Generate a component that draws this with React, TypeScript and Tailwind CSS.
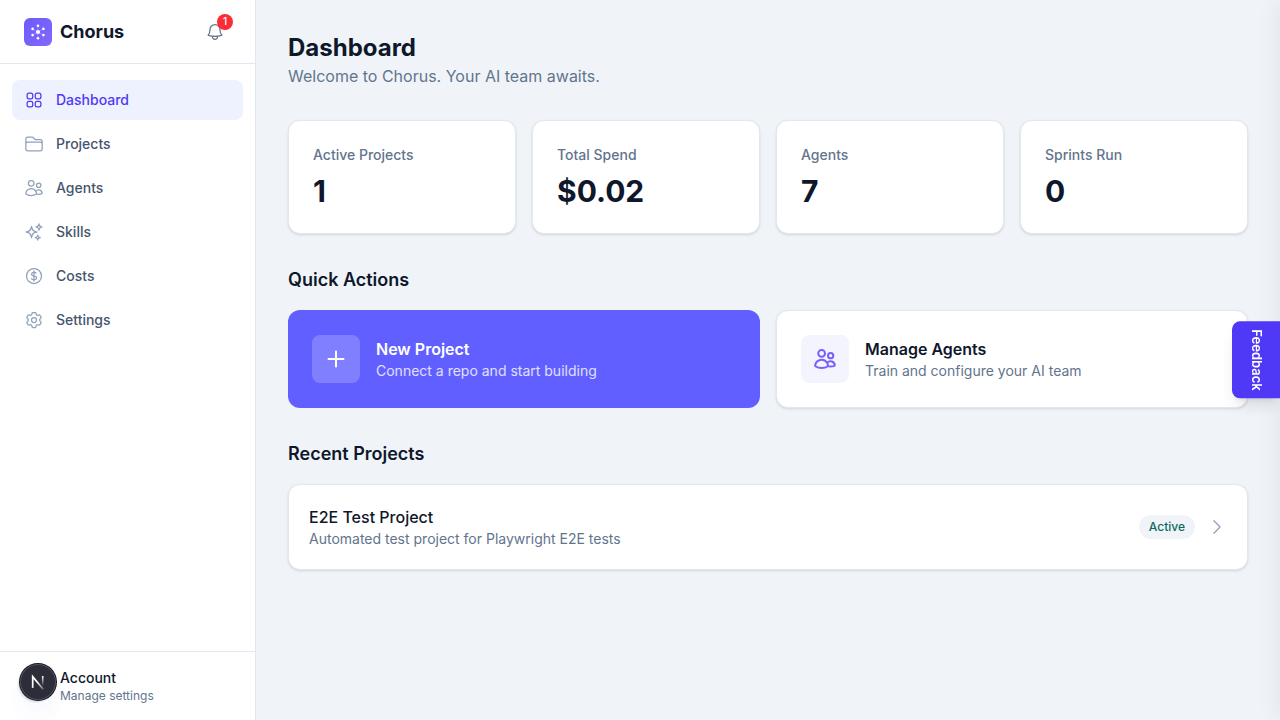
import type { ReactNode } from "react";
import type { IconType } from "react-icons";
import {
  HiOutlineBell,
  HiOutlineChevronRight,
  HiOutlineCog6Tooth,
  HiOutlineCurrencyDollar,
  HiOutlineFolder,
  HiOutlinePlus,
  HiOutlineSparkles,
  HiOutlineSquares2X2,
  HiOutlineUsers,
} from "react-icons/hi2";

const navItems: { label: string; icon: IconType; active?: boolean }[] = [
  { label: "Dashboard", icon: HiOutlineSquares2X2, active: true },
  { label: "Projects", icon: HiOutlineFolder },
  { label: "Agents", icon: HiOutlineUsers },
  { label: "Skills", icon: HiOutlineSparkles },
  { label: "Costs", icon: HiOutlineCurrencyDollar },
  { label: "Settings", icon: HiOutlineCog6Tooth },
];

const stats = [
  { label: "Active Projects", value: "1" },
  { label: "Total Spend", value: "$0.02" },
  { label: "Agents", value: "7" },
  { label: "Sprints Run", value: "0" },
];

function Logo() {
  return (
    <svg viewBox="0 0 28 28" className="size-7" aria-hidden="true">
      <defs>
        <linearGradient id="logo-fill" x1="0" y1="0" x2="1" y2="1">
          <stop offset="0" stopColor="#6c5cfa" />
          <stop offset="1" stopColor="#8367fb" />
        </linearGradient>
      </defs>
      <rect width="28" height="28" rx="6" fill="url(#logo-fill)" />
      <g stroke="#fff" strokeOpacity="0.3" strokeWidth="0.7">
        <path d="M14 7.8v12.4M8.6 10.9l10.8 6.2M8.6 17.1l10.8-6.2" />
      </g>
      <g fill="#fff">
        <circle cx="14" cy="14" r="2.1" />
        <circle cx="14" cy="7.8" r="1.3" />
        <circle cx="19.4" cy="10.9" r="1.3" />
        <circle cx="19.4" cy="17.1" r="1.3" />
        <circle cx="14" cy="20.2" r="1.3" />
        <circle cx="8.6" cy="17.1" r="1.3" />
        <circle cx="8.6" cy="10.9" r="1.3" />
      </g>
    </svg>
  );
}

function DevBadge() {
  return (
    <button
      type="button"
      aria-label="Open developer tools"
      className="fixed bottom-5 left-5 size-9 rounded-full bg-[#2c2d38] shadow-[0_0_0_1px_#171717,inset_0_0_0_1px_#4b5060,-2px_2px_2px_rgba(15,23,42,0.14),0_16px_24px_-8px_rgba(79,57,246,0.12)]"
    >
      <svg viewBox="0 0 36 36" className="size-9" fill="none" aria-hidden="true">
        <defs>
          <linearGradient id="n-stem" x1="0" y1="12" x2="0" y2="22" gradientUnits="userSpaceOnUse">
            <stop stopColor="#fff" />
            <stop offset="1" stopColor="#fff" stopOpacity="0" />
          </linearGradient>
          <linearGradient id="n-slash" x1="18" y1="17" x2="24" y2="25" gradientUnits="userSpaceOnUse">
            <stop stopColor="#fff" />
            <stop offset="1" stopColor="#fff" stopOpacity="0.3" />
          </linearGradient>
        </defs>
        <path d="M12.7 24V12.7L23.2 25.2" stroke="url(#n-slash)" strokeWidth="1.7" />
        <path d="M22.7 12v9.5" stroke="url(#n-stem)" strokeWidth="1.6" />
      </svg>
    </button>
  );
}

function SectionTitle({ children }: { children: ReactNode }) {
  return <h2 className="mb-4 text-lg font-semibold text-slate-900">{children}</h2>;
}

function Sidebar() {
  return (
    <aside className="sticky top-0 flex h-screen w-64 shrink-0 flex-col border-r border-slate-200 bg-white">
      <div className="flex h-16 shrink-0 items-center justify-between border-b border-slate-200 px-6">
        <a href="#" className="flex items-center gap-2">
          <Logo />
          <span className="text-lg font-bold text-slate-900">Chorus</span>
        </a>
        <button
          type="button"
          aria-label="Notifications, 1 unread"
          className="relative flex size-8 items-center justify-center text-slate-500"
        >
          <HiOutlineBell className="size-5" />
          <span className="absolute -top-0.5 -right-0.5 flex size-4 items-center justify-center rounded-full bg-[#fb2c36] text-[10px] font-medium text-white">
            1
          </span>
        </button>
      </div>
      <nav className="flex flex-1 flex-col gap-1 px-3 py-4">
        {navItems.map(({ label, icon: Icon, active }) => (
          <a
            key={label}
            href="#"
            aria-current={active ? "page" : undefined}
            className={
              active
                ? "flex h-10 items-center gap-3 rounded-lg bg-[#eef2ff] px-3 text-sm font-medium text-[#4f39f6]"
                : "flex h-10 items-center gap-3 rounded-lg px-3 text-sm font-medium text-slate-600"
            }
          >
            <Icon className={active ? "size-5 text-[#4f39f6]" : "size-5 text-slate-400"} />
            {label}
          </a>
        ))}
      </nav>
      <div className="border-t border-slate-200 py-4 pl-15">
        <p className="text-sm font-medium text-slate-900">Account</p>
        <p className="text-xs text-slate-500">Manage settings</p>
      </div>
    </aside>
  );
}

export default function App() {
  return (
    <div className="flex min-h-screen bg-[#f0f4f9] font-['Inter',sans-serif]">
      <Sidebar />
      <main className="min-w-0 flex-1 p-8">
        <header className="mb-8">
          <h1 className="text-2xl font-bold text-slate-900">Dashboard</h1>
          <p className="text-base text-slate-500">Welcome to Chorus. Your AI team awaits.</p>
        </header>

        <section className="mb-8 grid grid-cols-4 gap-4">
          {stats.map((s) => (
            <div key={s.label} className="rounded-xl border border-slate-200 bg-white p-6 shadow-sm">
              <p className="text-sm font-medium text-slate-500">{s.label}</p>
              <p className="mt-2 text-3xl font-bold text-slate-900">{s.value}</p>
            </div>
          ))}
        </section>

        <section className="mb-8">
          <SectionTitle>Quick Actions</SectionTitle>
          <div className="grid grid-cols-2 gap-4">
            <a href="#" className="flex items-center gap-4 rounded-xl bg-[#615fff] p-6">
              <span className="flex size-12 items-center justify-center rounded-lg bg-white/20 text-white">
                <HiOutlinePlus className="size-6 [stroke-width:2]" />
              </span>
              <span>
                <span className="block text-base font-semibold text-white">New Project</span>
                <span className="block text-sm text-white/80">Connect a repo and start building</span>
              </span>
            </a>
            <a
              href="#"
              className="flex items-center gap-4 rounded-xl border border-slate-200 bg-white p-6 shadow-sm"
            >
              <span className="flex size-12 items-center justify-center rounded-lg bg-[#f4f4ff] text-[#7860fa]">
                <HiOutlineUsers className="size-6 [stroke-width:2]" />
              </span>
              <span>
                <span className="block text-base font-semibold text-slate-900">Manage Agents</span>
                <span className="block text-sm text-slate-500">Train and configure your AI team</span>
              </span>
            </a>
          </div>
        </section>

        <section>
          <SectionTitle>Recent Projects</SectionTitle>
          <a
            href="#"
            className="flex items-center justify-between rounded-xl border border-slate-200 bg-white p-5 shadow-sm"
          >
            <span>
              <span className="block text-base font-medium text-slate-900">E2E Test Project</span>
              <span className="block text-sm text-slate-500">
                Automated test project for Playwright E2E tests
              </span>
            </span>
            <span className="flex items-center gap-3">
              <span className="rounded-full bg-[#f0f4f9] px-2.5 py-1 text-xs font-medium text-[#0b6b5c]">
                Active
              </span>
              <HiOutlineChevronRight className="size-5 text-slate-400" />
            </span>
          </a>
        </section>
      </main>

      <div className="pointer-events-none fixed inset-y-0 left-full w-96 shadow-[0_0_24px_rgba(15,23,42,0.08)]" />
      <button
        type="button"
        className="fixed top-1/2 right-0 flex w-12 -translate-y-1/2 items-center justify-center rounded-l-lg bg-[#4f39f6] pt-2 pb-2 text-[13px] font-semibold text-white shadow-lg [writing-mode:vertical-rl]"
      >
        Feedback
      </button>
      <DevBadge />
    </div>
  );
}
